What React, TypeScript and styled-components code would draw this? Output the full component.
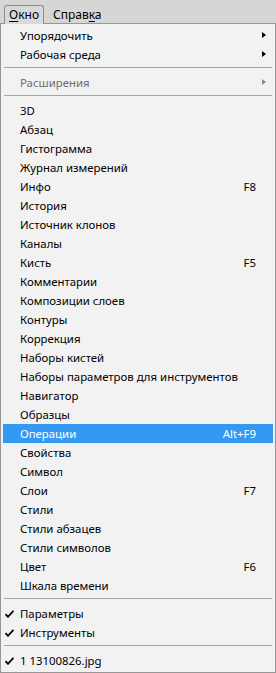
import React from "react";
import styled, { createGlobalStyle } from "styled-components";

const Global = createGlobalStyle`
  html, body { margin: 0; padding: 0; background: #f2f2f2; }
  body { font-family: "Noto Sans", "Segoe UI", Arial, sans-serif; font-size: 11.4px; color: #000; }
`;

const Page = styled.div`
  width: 276px;
  height: 673px;
  display: flex;
  flex-direction: column;
  overflow: hidden;
`;

const Bar = styled.div`
  height: 23px;
  flex: none;
  background: #d6d6d6;
  display: flex;
  align-items: flex-end;
  padding-left: 4px;
  gap: 1px;
`;

const BarItem = styled.div<{ $open?: boolean }>`
  padding: 0 ${(p) => (p.$open ? "4px" : "7px")};
  box-sizing: border-box;
  display: flex;
  align-items: center;
  line-height: 1;
  position: relative;
  z-index: 1;
  margin-bottom: ${(p) => (p.$open ? "-1px" : "0")};
  height: ${(p) => (p.$open ? "19px" : "18px")};
  background: ${(p) => (p.$open ? "#d9d9d9" : "transparent")};
  border: ${(p) => (p.$open ? "1px solid #8c8c8c" : "1px solid transparent")};
  border-bottom: none;
  border-radius: 3px 3px 0 0;
  color: #000;
  font-size: 12px;
  & u { text-decoration: underline; text-underline-offset: 2px; }
`;

const Menu = styled.div`
  flex: 1;
  border: 1px solid #979797;
  background: #f2f2f2;
  padding: 2px 2px 1px 2px;
  display: flex;
  flex-direction: column;
`;

const Row = styled.div<{ $active?: boolean; $disabled?: boolean }>`
  height: 19px;
  flex: none;
  display: flex;
  align-items: center;
  position: relative;
  padding-left: 17px;
  padding-right: 17px;
  background: ${(p) => (p.$active ? "#3399f3" : "transparent")};
  color: ${(p) => (p.$active ? "#fff" : p.$disabled ? "#6d6d6d" : "#000")};
  white-space: nowrap;
`;

const Label = styled.span`
  flex: 1;
`;

const Shortcut = styled.span`
  text-align: right;
`;

const Check = styled.span`
  position: absolute;
  left: 2px;
  top: 6px;
  width: 9px;
  height: 8px;
  display: flex;
`;

const Arrow = styled.span<{ $disabled?: boolean }>`
  position: absolute;
  right: 7px;
  top: 6px;
  width: 0;
  height: 0;
  border-top: 3.5px solid transparent;
  border-bottom: 3.5px solid transparent;
  border-left: 4px solid ${(p) => (p.$disabled ? "#8a8a8a" : "#000")};
`;

const Sep = styled.div`
  height: 9px;
  flex: none;
  display: flex;
  align-items: flex-start;
  padding: 3px 1px 0 1px;
  box-sizing: border-box;
  &::after {
    content: "";
    flex: 1;
    height: 1px;
    background: #a3a3a3;
  }
`;

type Item =
  | { sep: true }
  | { label: string; shortcut?: string; sub?: boolean; disabled?: boolean; checked?: boolean; active?: boolean; sep?: false };

const items: Item[] = [
  { label: "Упорядочить", sub: true },
  { label: "Рабочая среда", sub: true },
  { sep: true },
  { label: "Расширения", sub: true, disabled: true },
  { sep: true },
  { label: "3D" },
  { label: "Абзац" },
  { label: "Гистограмма" },
  { label: "Журнал измерений" },
  { label: "Инфо", shortcut: "F8" },
  { label: "История" },
  { label: "Источник клонов" },
  { label: "Каналы" },
  { label: "Кисть", shortcut: "F5" },
  { label: "Комментарии" },
  { label: "Композиции слоев" },
  { label: "Контуры" },
  { label: "Коррекция" },
  { label: "Наборы кистей" },
  { label: "Наборы параметров для инструментов" },
  { label: "Навигатор" },
  { label: "Образцы" },
  { label: "Операции", shortcut: "Alt+F9", active: true },
  { label: "Свойства" },
  { label: "Символ" },
  { label: "Слои", shortcut: "F7" },
  { label: "Стили" },
  { label: "Стили абзацев" },
  { label: "Стили символов" },
  { label: "Цвет", shortcut: "F6" },
  { label: "Шкала времени" },
  { sep: true },
  { label: "Параметры", checked: true },
  { label: "Инструменты", checked: true },
  { sep: true },
  { label: "1 13100826.jpg", checked: true },
];

const CheckIcon = () => (
  <svg width="9" height="8" viewBox="0 0 9 8">
    <path d="M0.5 4.2 L3 6.8 L8.5 0.8" fill="none" stroke="#000" strokeWidth="1.8" />
  </svg>
);

export default function App() {
  return (
    <Page>
      <Global />
      <Bar>
        <BarItem $open>
          <span>
            <u>О</u>кно
          </span>
        </BarItem>
        <BarItem>
          <span>
            Справ<u>к</u>а
          </span>
        </BarItem>
      </Bar>
      <Menu>
        {items.map((it, i) =>
          it.sep ? (
            <Sep key={i} />
          ) : (
            <Row key={i} $active={it.active} $disabled={it.disabled}>
              {it.checked && (
                <Check>
                  <CheckIcon />
                </Check>
              )}
              <Label>{it.label}</Label>
              {it.shortcut && <Shortcut>{it.shortcut}</Shortcut>}
              {it.sub && <Arrow $disabled={it.disabled} />}
            </Row>
          )
        )}
      </Menu>
    </Page>
  );
}
